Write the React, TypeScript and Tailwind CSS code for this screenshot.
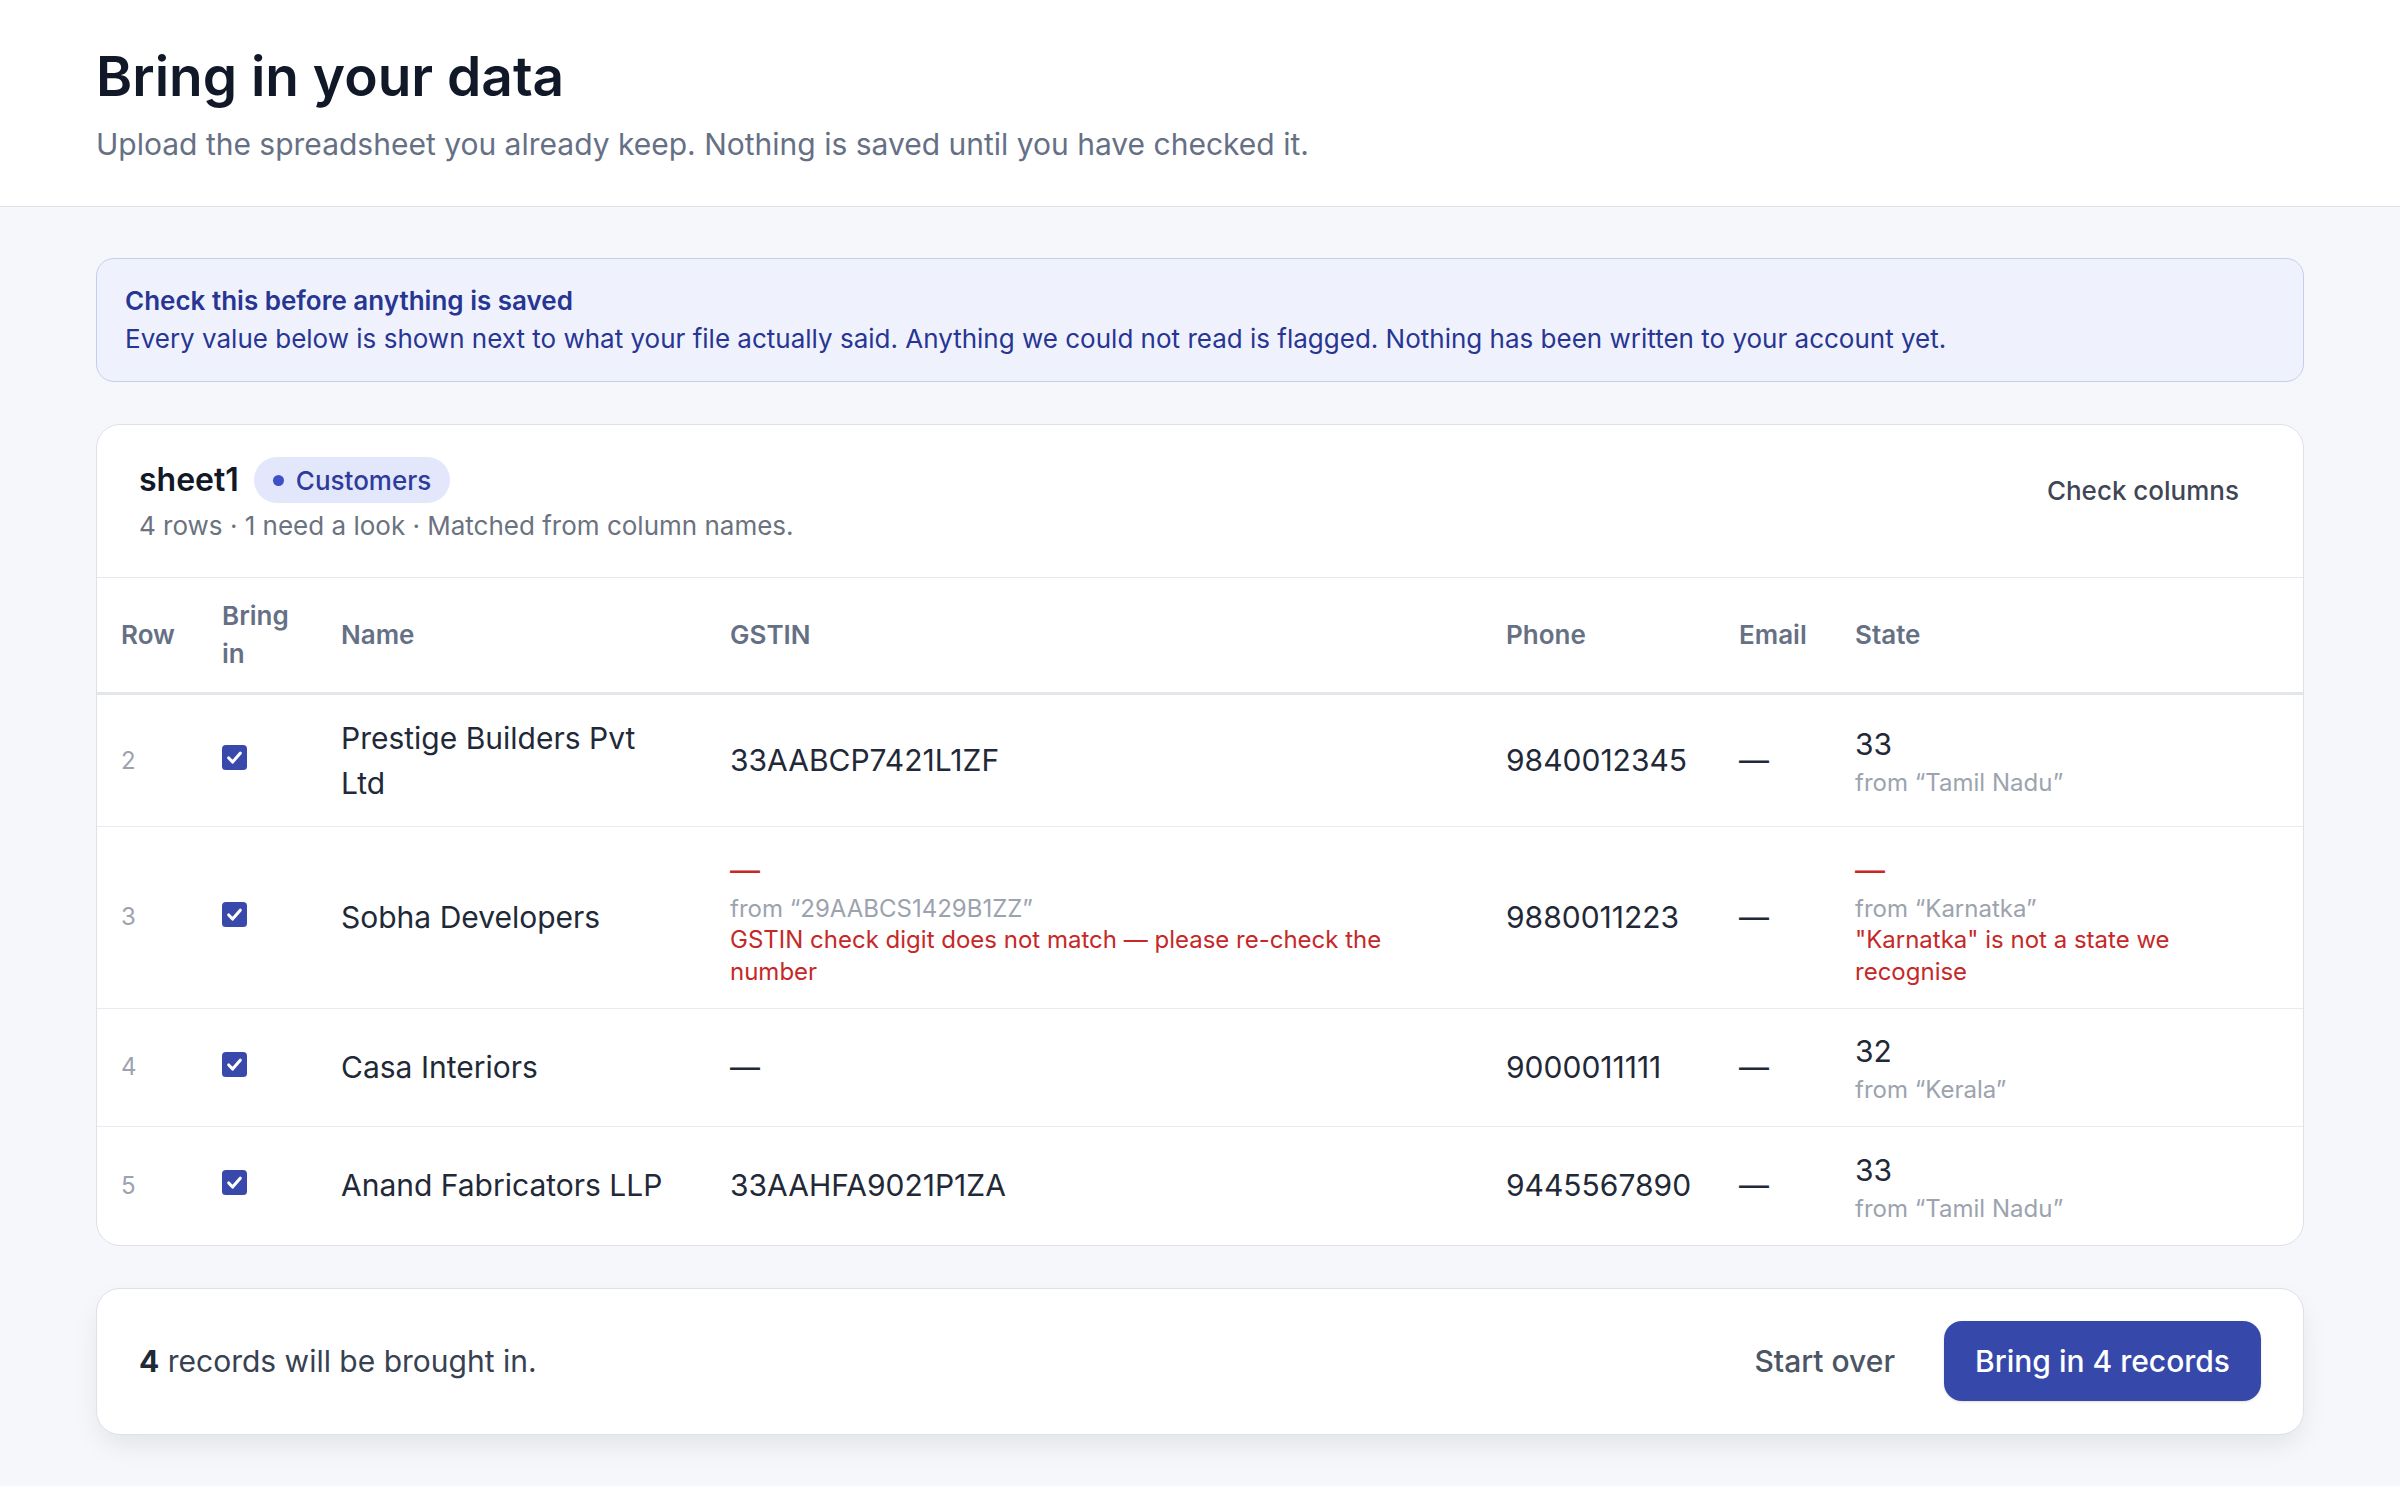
import React from 'react';

interface Row {
    num: number;
    name: string;
    gstin: string | null;
    gstinFrom?: string;
    gstinError?: string;
    phone: string;
    state: string | null;
    stateFrom: string;
    stateError?: string;
}

const rows: Row[] = [
    { num: 2, name: 'Prestige Builders Pvt Ltd', gstin: '33AABCP7421L1ZF', phone: '9840012345', state: '33', stateFrom: 'Tamil Nadu' },
    {
        num: 3,
        name: 'Sobha Developers',
        gstin: null,
        gstinFrom: '29AABCS1429B1ZZ',
        gstinError: 'GSTIN check digit does not match — please re-check the number',
        phone: '9880011223',
        state: null,
        stateFrom: 'Karnatka',
        stateError: '"Karnatka" is not a state we recognise',
    },
    { num: 4, name: 'Casa Interiors', gstin: '', phone: '9000011111', state: '32', stateFrom: 'Kerala' },
    { num: 5, name: 'Anand Fabricators LLP', gstin: '33AAHFA9021P1ZA', phone: '9445567890', state: '33', stateFrom: 'Tamil Nadu' },
];

const Checkbox = () => (
    <svg width="25" height="25" viewBox="0 0 26 26" className="block mb-[6px]">
        <rect x="0" y="0" width="26" height="26" rx="4" fill="#3949ab" />
        <path d="M7 13.5l4 4.2 8-9.2" fill="none" stroke="#fff" strokeWidth="3.2" strokeLinecap="round" strokeLinejoin="round" />
    </svg>
);

const Missing = () => <div className="text-[#c62828]">—</div>;

const cell = 'px-[24px] py-[20.5px] align-middle text-[30px] leading-[45px] text-[#1f2937]';
const sub = 'text-[24px] leading-[31.5px]';

const App: React.FC = () => {
    return (
        <div className="min-h-screen bg-[#f5f7fa] font-['Inter',sans-serif] text-[#1f2937]">
            <header className="bg-white border-b-[1.5px] border-[#dde1e8] px-[96px] pt-[43px] pb-[39px]">
                <h1 className="text-[55px] leading-[66px] font-semibold text-[#111827]">Bring in your data</h1>
                <p className="mt-[13px] text-[30px] leading-[45px] text-[#667085]">
                    Upload the spreadsheet you already keep. Nothing is saved until you have checked it.
                </p>
            </header>

            <main className="px-[96px] pt-[51px] pb-[48px] flex flex-col gap-[42px]">
                <div className="rounded-[18px] border-[1.5px] border-[#c5cdf3] bg-[#eff2fd] px-[28px] py-[23px]">
                    <div className="text-[26px] leading-[38px] font-semibold text-[#283593]">Check this before anything is saved</div>
                    <div className="text-[26px] leading-[38px] text-[#283593]">
                        Every value below is shown next to what your file actually said. Anything we could not read is flagged. Nothing has been written to your account yet.
                    </div>
                </div>

                <div className="rounded-[24px] border-[1.5px] border-[#dde1e8] bg-white overflow-hidden">
                    <div className="flex items-start justify-between px-[42px] py-[32px] border-b-[1.5px] border-[#e5e8ee]">
                        <div>
                            <div className="flex items-center gap-[15px]">
                                <span className="text-[32px] leading-[46px] font-semibold text-[#111827]">sheet1</span>
                                <span className="inline-flex items-center gap-[12px] h-[46px] px-[19px] rounded-full bg-[#e2e7fb] text-[26px] font-medium text-[#2f3b9a]">
                                    <span className="w-[11px] h-[11px] rounded-full bg-[#3f51c7]" />
                                    Customers
                                </span>
                            </div>
                            <div className="mt-[3px] text-[26px] leading-[39px] text-[#6b7280]">
                                4 rows · 1 need a look · Matched from column names.
                            </div>
                        </div>
                        <button className="px-[22px] py-[15px] text-[26px] leading-[38px] font-medium text-[#3f4654] rounded-[12px]">
                            Check columns
                        </button>
                    </div>

                    <table className="w-full table-fixed border-collapse text-left">
                        <colgroup>
                            <col className="w-[101px]" />
                            <col className="w-[119px]" />
                            <col className="w-[389px]" />
                            <col className="w-[776px]" />
                            <col className="w-[233px]" />
                            <col className="w-[116px]" />
                            <col />
                        </colgroup>
                        <thead>
                            <tr className="border-b-[3px] border-[#e3e6eb]">
                                {['Row', 'Bring in', 'Name', 'GSTIN', 'Phone', 'Email', 'State'].map(h => (
                                    <th key={h} className="px-[24px] py-[19px] text-[26px] leading-[38px] font-semibold text-[#667085] align-middle">
                                        {h === 'Bring in' ? <>Bring<br />in</> : h}
                                    </th>
                                ))}
                            </tr>
                        </thead>
                        <tbody>
                            {rows.map((r, i) => (
                                <tr key={r.num} className={i < rows.length - 1 ? 'border-b-[1.5px] border-[#e8ebf0]' : ''}>
                                    <td className="px-[24px] py-[20.5px] align-middle text-[24px] text-[#9ca3af]">{r.num}</td>
                                    <td className="px-[24px] py-[20.5px] align-middle"><Checkbox /></td>
                                    <td className={cell}>{r.name}</td>
                                    <td className={cell}>
                                        {r.gstin === null ? (
                                            <div>
                                                <Missing />
                                                <div className={`${sub} text-[#9ca3af]`}>from “{r.gstinFrom}”</div>
                                                <div className={`${sub} text-[#c62828]`}>{r.gstinError}</div>
                                            </div>
                                        ) : r.gstin === '' ? (
                                            '—'
                                        ) : (
                                            r.gstin
                                        )}
                                    </td>
                                    <td className={cell}>{r.phone}</td>
                                    <td className={cell}>—</td>
                                    <td className={cell}>
                                        {r.state === null ? <Missing /> : <div>{r.state}</div>}
                                        <div className={`${sub} text-[#9ca3af]`}>from “{r.stateFrom}”</div>
                                        {r.stateError && <div className={`${sub} text-[#c62828]`}>{r.stateError}</div>}
                                    </td>
                                </tr>
                            ))}
                        </tbody>
                    </table>
                </div>

                <div className="flex items-center justify-between rounded-[24px] border-[1.5px] border-[#dde1e8] bg-white px-[42px] py-[32px] shadow-[0_12px_30px_-6px_rgba(17,24,39,0.10)]">
                    <div className="text-[30px] text-[#374151]">
                        <span className="font-bold text-[#1f2937]">4</span> records will be brought in.
                    </div>
                    <div className="flex items-center gap-[25px]">
                        <button className="px-[24px] py-[18px] text-[30px] font-medium text-[#4b5563] rounded-[14px]">Start over</button>
                        <button className="h-[80px] px-[31px] rounded-[18px] bg-[#3649ab] text-[30px] font-medium text-white shadow-sm">
                            Bring in 4 records
                        </button>
                    </div>
                </div>
            </main>
        </div>
    );
};

export default App;
